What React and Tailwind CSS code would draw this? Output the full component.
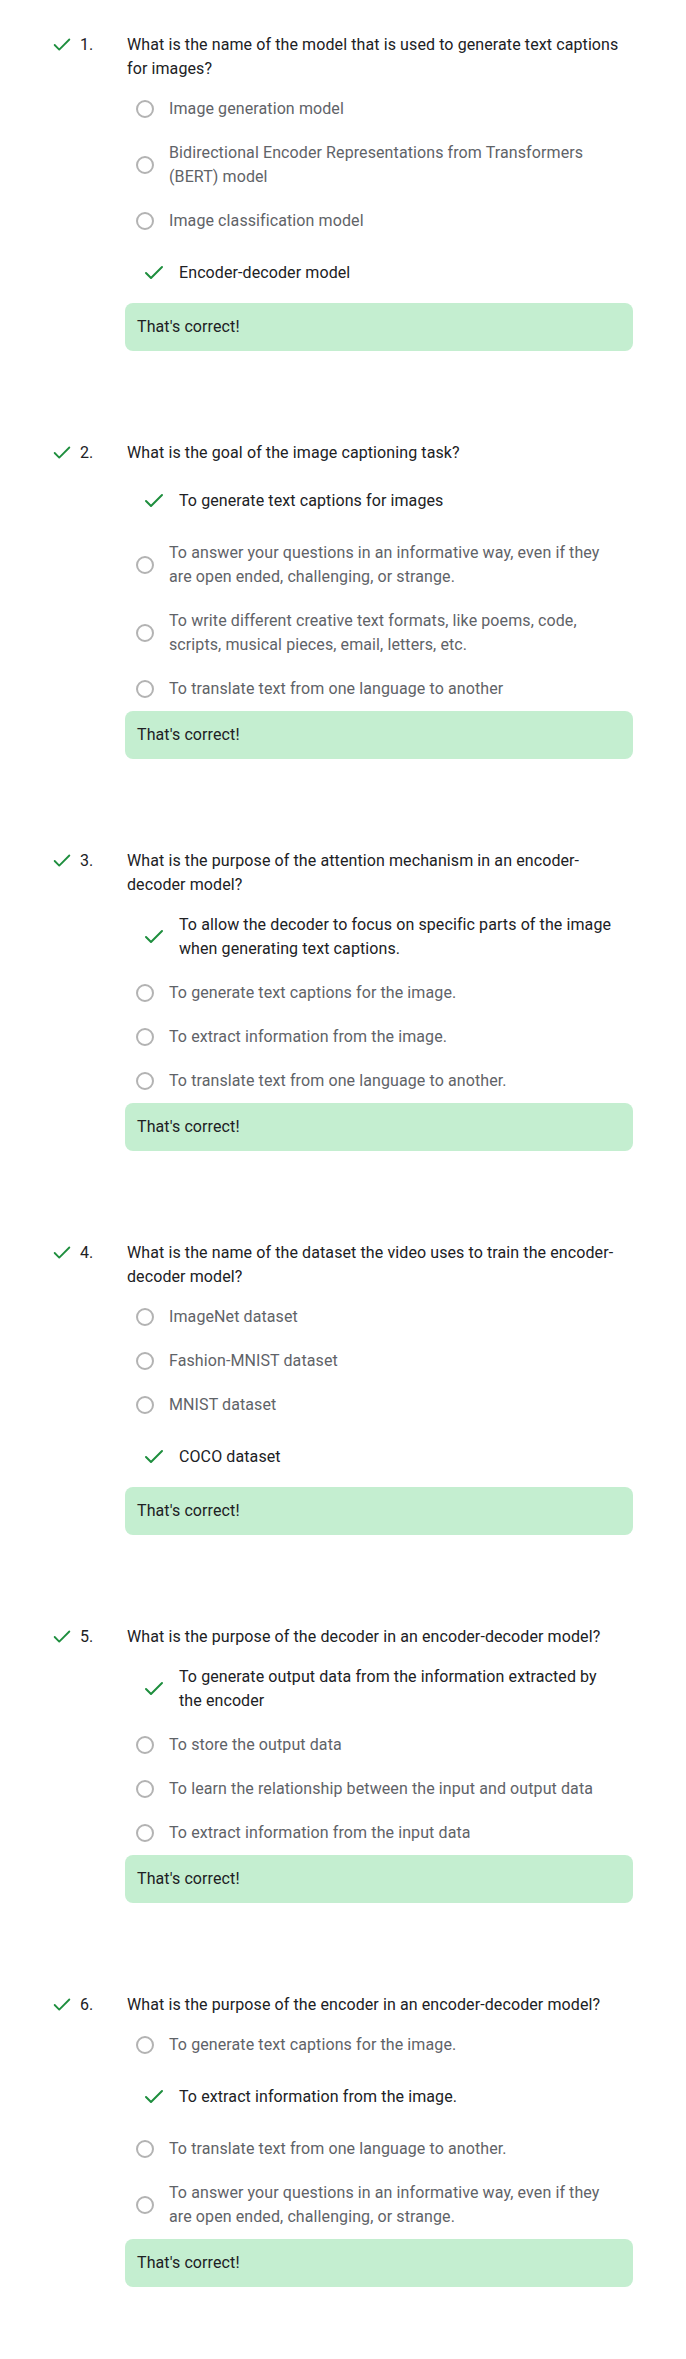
import { Check } from 'lucide-react'

const questions = [
  {
    n: 1,
    text: 'What is the name of the model that is used to generate text captions for images?',
    options: [
      { label: 'Image generation model' },
      { label: 'Bidirectional Encoder Representations from Transformers (BERT) model' },
      { label: 'Image classification model' },
      { label: 'Encoder-decoder model', correct: true },
    ],
  },
  {
    n: 2,
    text: 'What is the goal of the image captioning task?',
    options: [
      { label: 'To generate text captions for images', correct: true },
      { label: 'To answer your questions in an informative way, even if they are open ended, challenging, or strange.' },
      { label: 'To write different creative text formats, like poems, code, scripts, musical pieces, email, letters, etc.' },
      { label: 'To translate text from one language to another' },
    ],
  },
  {
    n: 3,
    text: 'What is the purpose of the attention mechanism in an encoder-decoder model?',
    options: [
      { label: 'To allow the decoder to focus on specific parts of the image when generating text captions.', correct: true },
      { label: 'To generate text captions for the image.' },
      { label: 'To extract information from the image.' },
      { label: 'To translate text from one language to another.' },
    ],
  },
  {
    n: 4,
    text: 'What is the name of the dataset the video uses to train the encoder-decoder model?',
    options: [
      { label: 'ImageNet dataset' },
      { label: 'Fashion-MNIST dataset' },
      { label: 'MNIST dataset' },
      { label: 'COCO dataset', correct: true },
    ],
  },
  {
    n: 5,
    text: 'What is the purpose of the decoder in an encoder-decoder model?',
    options: [
      { label: 'To generate output data from the information extracted by the encoder', correct: true },
      { label: 'To store the output data' },
      { label: 'To learn the relationship between the input and output data' },
      { label: 'To extract information from the input data' },
    ],
  },
  {
    n: 6,
    text: 'What is the purpose of the encoder in an encoder-decoder model?',
    options: [
      { label: 'To generate text captions for the image.' },
      { label: 'To extract information from the image.', correct: true },
      { label: 'To translate text from one language to another.' },
      { label: 'To answer your questions in an informative way, even if they are open ended, challenging, or strange.' },
    ],
  },
]

function Option({ label, correct }) {
  if (correct) {
    return (
      <div className="flex items-center min-h-[60px] py-[10px] pl-[17px] pr-[12px]">
        <Check size={24} strokeWidth={2} className="shrink-0 text-[#1e8e3e]" />
        <span className="ml-[13px] text-[16px] leading-6 text-[#202124]">{label}</span>
      </div>
    )
  }
  return (
    <div className="flex items-center py-[10px] pl-[11px] pr-[12px]">
      <span className="shrink-0 w-[18px] h-[18px] rounded-full border-2 border-[#b3b3b3]" />
      <span className="ml-[15px] text-[16px] leading-6 text-[#5f6368]">{label}</span>
    </div>
  )
}

function Question({ q }) {
  return (
    <div>
      {/* question line */}
      <div className="flex pl-[51px]">
        <div className="w-[22px] h-6 flex items-center shrink-0">
          <Check size={22} strokeWidth={2} className="text-[#1e8e3e]" />
        </div>
        <span className="w-[54px] pl-[7px] shrink-0 text-[16px] leading-6 text-[#202124]">{q.n}.</span>
        <p className="w-[506px] text-[16px] leading-6 text-[#202124]">{q.text}</p>
      </div>

      <div className="ml-[125px] w-[508px] mt-[6px] flex flex-col">
        {q.options.map((o, i) => (
          <Option key={i} {...o} />
        ))}
        <div className="h-[48px] rounded-lg bg-[#c4eed0] flex items-center px-[12px]">
          <span className="text-[16px] leading-6 text-[#202124]">That's correct!</span>
        </div>
      </div>
    </div>
  )
}

export default function App() {
  return (
    <div className="min-h-screen bg-white pt-[33px] pb-[75px] tracking-[0.1px] font-['Roboto','Liberation_Sans',sans-serif]">
      <div className="flex flex-col gap-[90px]">
        {questions.map(q => (
          <Question key={q.n} q={q} />
        ))}
      </div>
    </div>
  )
}
